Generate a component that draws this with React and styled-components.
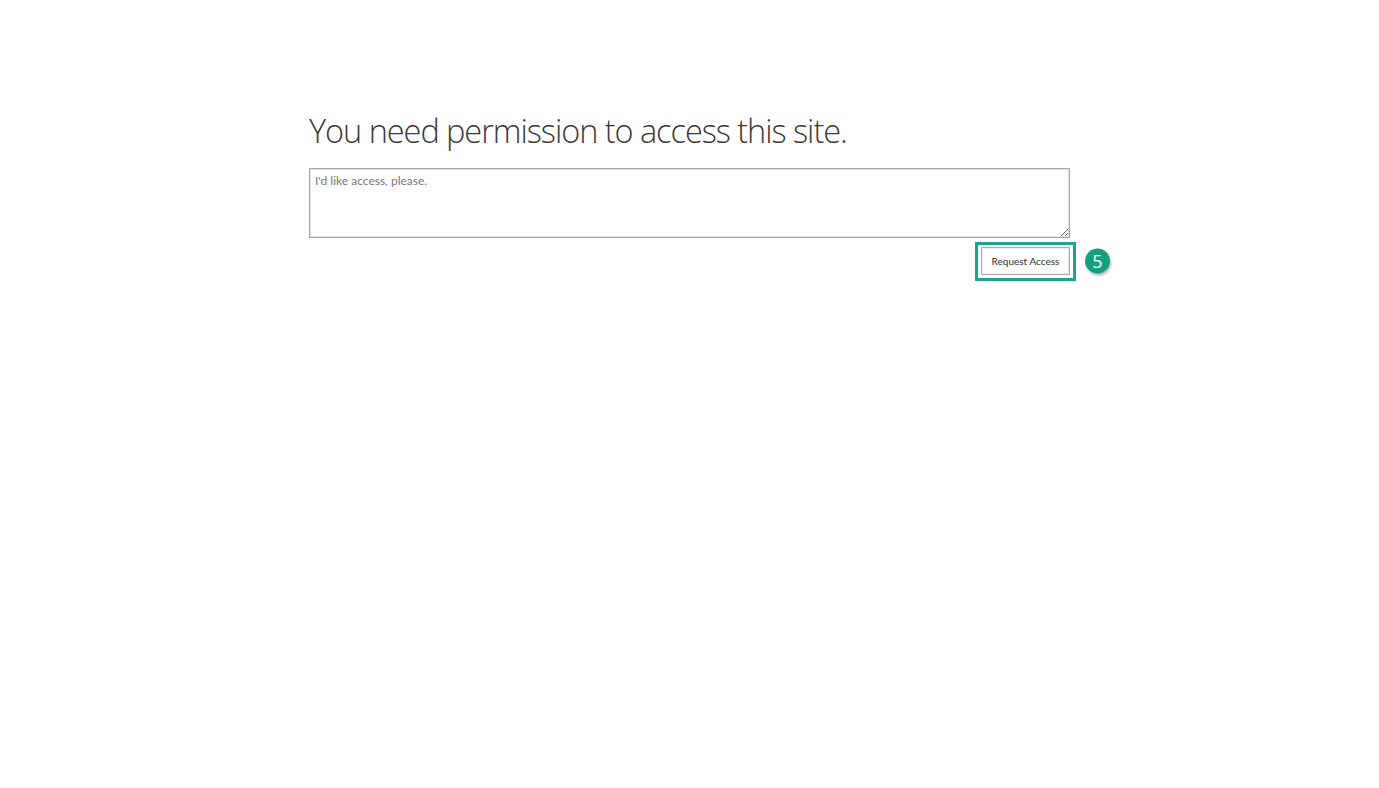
import React from "react";
import styled, { createGlobalStyle } from "styled-components";

const GlobalStyle = createGlobalStyle`
  html, body {
    margin: 0;
    padding: 0;
    background: #ffffff;
    font-family: "Open Sans", Lato, "Liberation Sans", sans-serif;
  }
`;

const Page = styled.div`
  width: 100%;
  min-height: 100vh;
  display: flex;
  justify-content: center;
`;

const Content = styled.div`
  width: 761px;
  padding-top: 108px;
  display: flex;
  flex-direction: column;
`;

const Title = styled.h1`
  margin: 0 0 14px 0;
  font-family: "Open Sans", Lato, "Liberation Sans", sans-serif;
  font-weight: 300;
  font-size: 32.5px;
  line-height: 46px;
  letter-spacing: -1.05px;
  color: #3a3a3a;
`;

const Message = styled.textarea`
  box-sizing: border-box;
  width: 761px;
  height: 70px;
  margin: 0;
  padding: 4px 5px;
  border: 1px solid #a9a9a9;
  box-shadow: inset 0 0 0 1px #e2e2e2;
  font-family: Lato, "Open Sans", "Liberation Sans", sans-serif;
  font-size: 12px;
  color: #333;
  resize: vertical;
  outline: none;
  &::placeholder {
    color: #767676;
  }
`;

const ButtonRow = styled.div`
  display: flex;
  justify-content: flex-end;
  margin-top: 9px;
`;

const Callout = styled.div`
  position: relative;
  display: flex;
`;

const Highlight = styled.div`
  position: absolute;
  top: -5px;
  left: -6px;
  right: -6px;
  bottom: -6px;
  border: 3px solid #1aa589;
  pointer-events: none;
`;

const Badge = styled.div`
  position: absolute;
  top: 50%;
  left: calc(100% + 15px);
  transform: translateY(-50%);
  width: 25px;
  height: 25px;
  border-radius: 50%;
  background: #14a07f;
  box-shadow: 1px 2px 3px rgba(0, 0, 0, 0.3);
  color: #ffffff;
  font-family: "Open Sans", "Liberation Sans", sans-serif;
  font-size: 18px;
  line-height: 25px;
  text-align: center;
`;

const Button = styled.button`
  box-sizing: border-box;
  width: 89px;
  height: 28px;
  margin: 0;
  padding: 0;
  border: 1px solid #ababab;
  box-shadow: inset 0 0 0 1px #ececec;
  background: #fdfdfd;
  font-family: Lato, "Open Sans", "Liberation Sans", sans-serif;
  font-size: 10px;
  color: #333333;
  cursor: pointer;
`;

export default function App() {
  return (
    <>
      <GlobalStyle />
      <Page>
        <Content>
          <Title>You need permission to access this site.</Title>
          <Message placeholder="I'd like access, please." />
          <ButtonRow>
            <Callout>
              <Button>Request Access</Button>
              <Highlight />
              <Badge>5</Badge>
            </Callout>
          </ButtonRow>
        </Content>
      </Page>
    </>
  );
}
